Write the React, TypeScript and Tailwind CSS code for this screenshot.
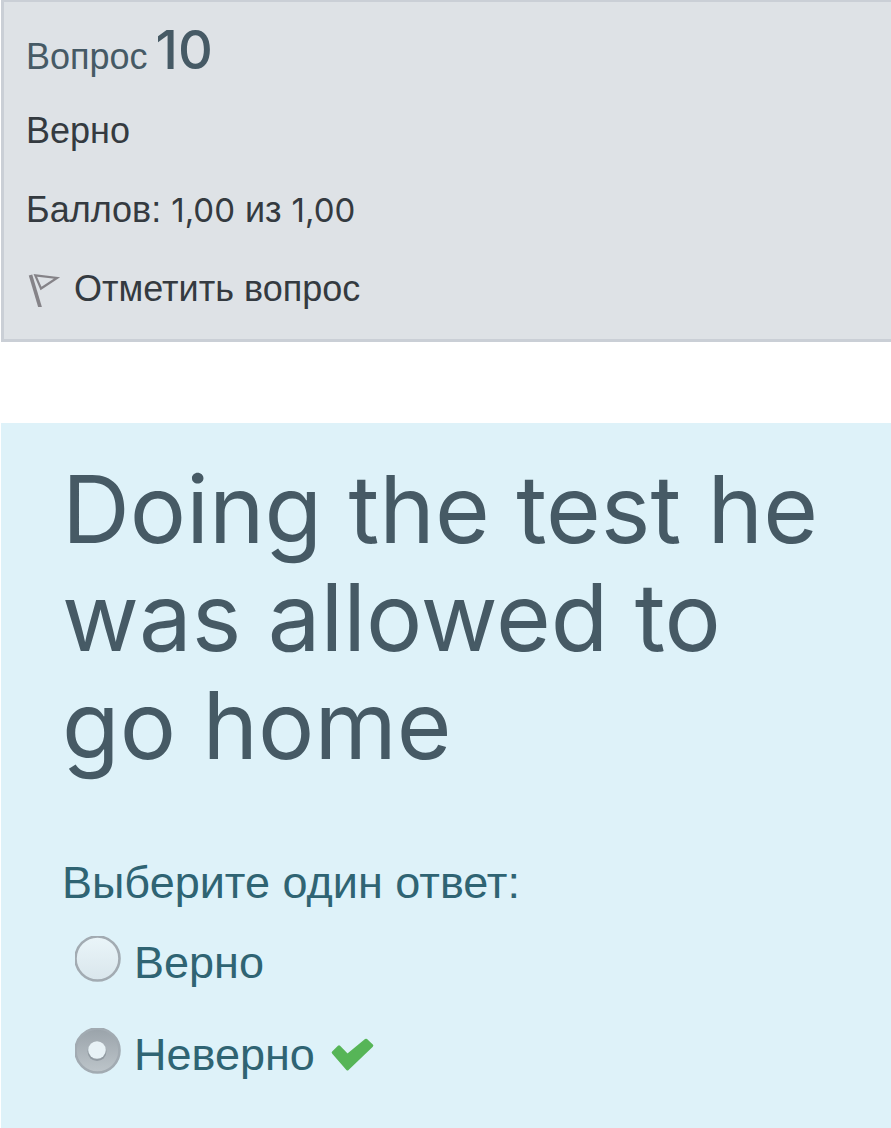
import React from "react";

function Num({ children }: { children: React.ReactNode }) {
  return <span className="font-['Inter',sans-serif] text-[33px]">{children}</span>;
}

const options = [
  { id: "true", label: "Верно", correct: false },
  { id: "false", label: "Неверно", correct: true },
];

export default function App() {
  return (
    <main className="flex min-h-screen flex-col bg-white pl-px font-['Liberation_Sans',Arial,sans-serif]">
      <section className="border-t-2 border-b-[3px] border-l-[3px] border-[#cacfd6] bg-[#dee2e6] pb-[30px] pl-[22px] pt-[18px] text-[36px] leading-[40px] text-[#343a40]">
        <h3 className="flex items-baseline gap-2 leading-[60px] text-[#465a65]">
          Вопрос
          <span className="font-['Inter',sans-serif] text-[54px] font-medium">10</span>
        </h3>
        <div className="mt-6">Верно</div>
        <div className="mt-[39px]">
          Баллов: <Num>1,00</Num> из <Num>1,00</Num>
        </div>
        <button type="button" className="mt-[39px] flex items-center gap-3">
          <svg className="h-9 w-9" viewBox="0 0 36 36" fill="none" stroke="#858388" aria-hidden="true">
            <path d="M4.5 4L14.3 37" strokeWidth="3.6" />
            <path d="M9.3 4.4L31 7L15 17.5Z" strokeWidth="2.2" />
          </svg>
          Отметить вопрос
        </button>
      </section>
      <section className="mt-[81px] flex-1 bg-[#def2f9] pb-10 pl-[61px] pr-16 pt-8 text-[#2f6473]">
        <h1 className="font-['Inter',sans-serif] text-[94px] leading-[108px] text-[#465a65]">
          Doing the test he
          <br />
          was allowed to
          <br />
          go home
        </h1>
        <fieldset className="mt-[78px] text-[45px] leading-[52px]">
          <legend>Выберите один ответ:</legend>
          <div className="mt-[26px] flex flex-col gap-9 pl-3">
            {options.map((o) => (
              <div key={o.id} className="relative flex items-center">
                <input
                  id={o.id}
                  type="radio"
                  name="answer"
                  defaultChecked={o.correct}
                  className="sr-only"
                />
                <label htmlFor={o.id} className="flex items-center gap-3">
                  <svg className="mb-2 h-12 w-12" viewBox="0 0 48 48" aria-hidden="true">
                    <defs>
                      <linearGradient id={"ring" + o.id} x1="0" y1="0" x2="0" y2="1">
                        <stop offset="0" stopColor={o.correct ? "#9aa3aa" : "#eaf5f9"} />
                        <stop offset="1" stopColor={o.correct ? "#bdc5ca" : "#d9e6ec"} />
                      </linearGradient>
                      <clipPath id={"clip" + o.id}>
                        <rect x="1" y="1" width="47" height="47" />
                      </clipPath>
                    </defs>
                    <g clipPath={`url(#clip${o.id})`}>
                      <circle cx="23.5" cy="23.5" r="22" fill={`url(#ring${o.id})`} stroke="#a2abb2" strokeWidth="2.6" />
                      {o.correct && (
                        <>
                          <circle cx="23" cy="24.5" r="9.5" fill="#929ba2" />
                          <circle cx="23" cy="23" r="8.8" fill="#e8f2f6" />
                        </>
                      )}
                    </g>
                  </svg>
                  {o.label}
                </label>
                {o.correct && (
                  <svg className="ml-4 h-9 w-11" viewBox="0 0 44 36" role="img" aria-label="Верно">
                    <path
                      d="M2.2 15.5L8 9.8L16.5 18.5L35 3.2L40.8 8.6L16.5 32Z"
                      fill="#56b557"
                      stroke="#56b557"
                      strokeWidth="3"
                      strokeLinejoin="round"
                    />
                  </svg>
                )}
              </div>
            ))}
          </div>
        </fieldset>
      </section>
    </main>
  );
}
